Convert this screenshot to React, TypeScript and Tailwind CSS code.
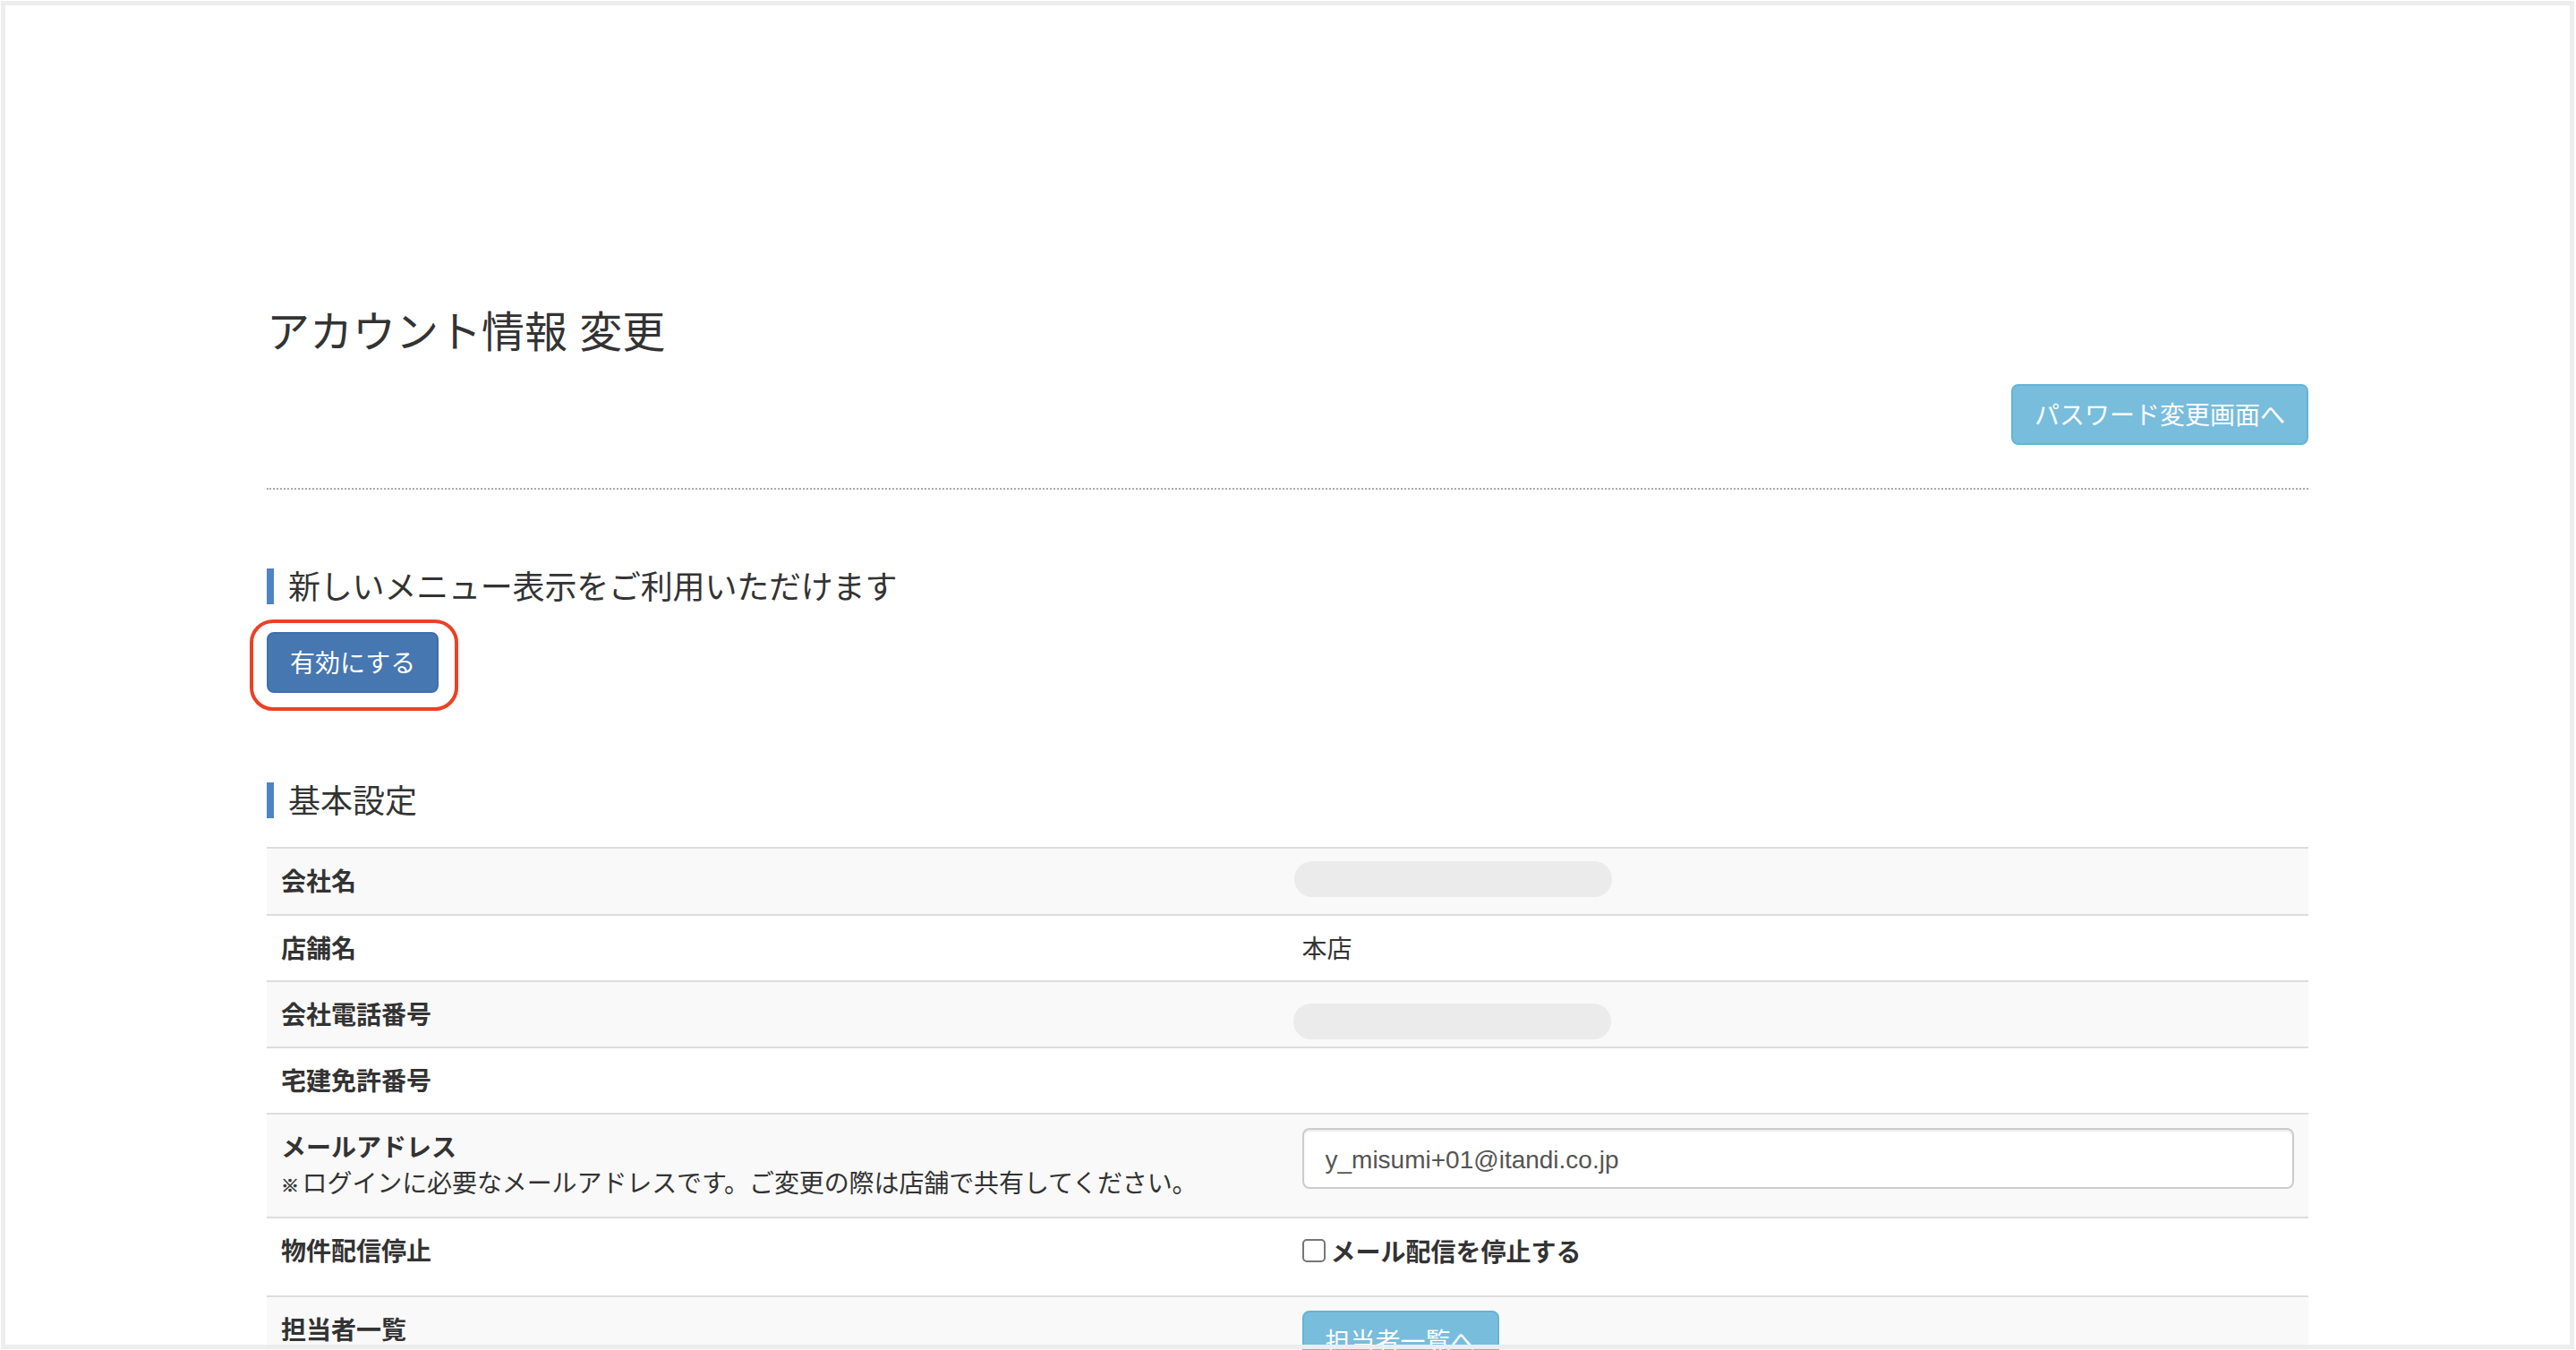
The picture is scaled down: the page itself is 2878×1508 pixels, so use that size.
import React from "react";

const Heading = ({ children, tight }: { children: React.ReactNode; tight?: boolean }) => (
  <h2 className={`h-10 border-l-8 border-[#5083c4] pt-[2px] pl-4 text-[36px] leading-10 font-normal text-[#333] ${tight ? "tracking-[-0.2px]" : ""}`}>{children}</h2>
);

const Row = ({
  label,
  note,
  striped,
  children,
  rightClass = "",
}: {
  label: string;
  note?: boolean;
  striped?: boolean;
  children?: React.ReactNode;
  rightClass?: string;
}) => (
  <div className={`grid grid-cols-2 border-t-2 border-[#ddd] ${striped ? "bg-[#f9f9f9]" : "bg-white"}`}>
    <div className="px-4 pt-[18px] pb-[14px]">
      <div className="font-bold">{label}</div>
      {note && (
        <div className="tracking-[-0.1px] whitespace-nowrap">
          <span className="mr-[-4px] text-[20px] font-bold [-webkit-text-stroke:0.6px_#333]">※</span> ログインに必要なメールアドレスです。ご変更の際は店舗で共有してください。
        </div>
      )}
    </div>
    <div className={rightClass}>{children}</div>
  </div>
);

export default function App() {
  return (
    <div className="relative h-[1508px] overflow-hidden bg-white font-['Liberation_Sans','Noto_Sans_CJK_JP',sans-serif] text-[28px] leading-10 text-[#333]">
      <main className="ml-[298px] w-[2281px] pt-[336px]">
        <h1 className="pt-[6px] text-[48px] leading-[60px] font-normal">アカウント情報 変更</h1>
        <div className="mt-[27px] flex justify-end">
          <button className="rounded-lg border-2 border-[#66b3d6] bg-[#78bddc] px-6 pt-[14px] pb-[10px] text-white">パスワード変更画面へ</button>
        </div>
        <div className="mt-[48px] border-b-2 border-dotted border-[#aaa]" />
        <div className="mt-[88px]">
          <Heading tight>新しいメニュー表示をご利用いただけます</Heading>
        </div>
        <div className="relative mt-[31px] inline-block align-top">
          <button className="block rounded-lg border-2 border-[#3f6fa8] bg-[#4677b0] px-6 pt-[14px] pb-[10px] text-white">有効にする</button>
          <span className="absolute -top-[14px] -right-[22px] -bottom-[20px] -left-[19px] rounded-[26px] border-4 border-[#ec4125]" />
        </div>
        <div className="mt-[100px]">
          <Heading>基本設定</Heading>
        </div>
        <div className="mt-8">
          <Row label="会社名" striped rightClass="min-h-[73px] pt-[14px] pl-[7px]">
            <div className="h-10 w-[355px] rounded-full bg-[#ebebeb]" />
          </Row>
          <Row label="店舗名" rightClass="px-4 pt-[18px] pb-[14px]">本店</Row>
          <Row label="会社電話番号" striped rightClass="pt-6 pl-[6px]">
            <div className="h-10 w-[355px] rounded-full bg-[#ebebeb]" />
          </Row>
          <Row label="宅建免許番号" />
          <Row label="メールアドレス" note striped rightClass="px-4 pt-[15px] pb-4">
            <input
              readOnly
              value="y_misumi+01@itandi.co.jp"
              className="block h-[68px] w-full rounded-lg border-2 border-[#ccc] bg-white px-6 pt-1 text-[#555] shadow-[inset_0_2px_2px_rgba(0,0,0,0.075)] outline-none"
            />
          </Row>
          <Row label="物件配信停止" rightClass="pt-[19px] pb-[27px] pl-4">
            <label className="flex items-center font-bold">
              <input type="checkbox" className="mr-[6px] -mt-[6px] h-[26px] w-[26px] appearance-none rounded-[5px] border-2 border-[#767676] bg-white" />
              メール配信を停止する
            </label>
          </Row>
          <Row label="担当者一覧" striped rightClass="px-4 pt-[15px]">
            <button className="rounded-lg border-2 border-[#66b3d6] bg-[#78bddc] px-6 pt-[14px] pb-[10px] text-white">担当者一覧へ</button>
          </Row>
        </div>
      </main>
      <div className="pointer-events-none absolute top-px right-[2px] bottom-px left-px border-[5px] border-[#ededed]" />
    </div>
  );
}
